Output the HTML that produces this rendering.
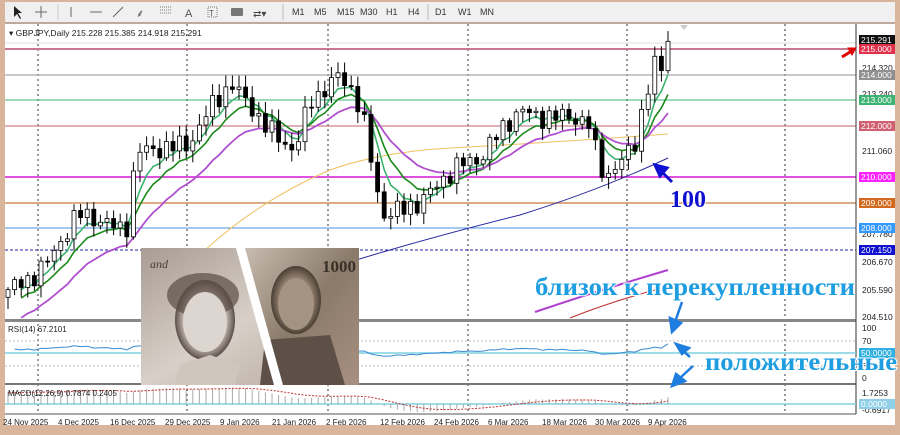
<!DOCTYPE html>
<html><head><meta charset="utf-8">
<style>
html,body{margin:0;padding:0;background:#d9b59b;}
body{width:900px;height:435px;overflow:hidden;position:relative;font-family:"Liberation Sans",sans-serif;}
svg{position:absolute;left:0;top:0;}
</style></head>
<body>
<svg id="s" width="900" height="435" xmlns="http://www.w3.org/2000/svg" font-family="Liberation Sans, sans-serif">
<defs>
<linearGradient id="gl" x1="0" y1="0" x2="1" y2="1"><stop offset="0" stop-color="#a89c94"/><stop offset="0.5" stop-color="#d8d0c8"/><stop offset="1" stop-color="#b0a49a"/></linearGradient>
<linearGradient id="gr" x1="0" y1="0" x2="1" y2="1"><stop offset="0" stop-color="#c8bcb0"/><stop offset="0.5" stop-color="#8a7a6a"/><stop offset="1" stop-color="#a89080"/></linearGradient>
<radialGradient id="face1"><stop offset="0" stop-color="#e8e2dc"/><stop offset="0.7" stop-color="#c8beb6"/><stop offset="1" stop-color="#5a4e48"/></radialGradient>
<radialGradient id="face2"><stop offset="0" stop-color="#b8a898"/><stop offset="0.7" stop-color="#8a7868"/><stop offset="1" stop-color="#4a3e34"/></radialGradient>
</defs>
<rect x="5" y="2" width="890" height="20" fill="#f0f0f0"/>
<line x1="5" y1="23" x2="895" y2="23" stroke="#a0a0a0"/>
<g font-size="9" fill="#333">
<path d="M14 6 L14 17 L17 14 L20 19 L21 18 L18 13 L22 13 Z" fill="#222"/>
<path d="M41 6v12M35 12h12" stroke="#666"/>
<line x1="58" y1="4" x2="58" y2="20" stroke="#ccc"/>
<path d="M71 7v10" stroke="#666"/>
<path d="M90 12h12" stroke="#666"/>
<path d="M113 17l10-10" stroke="#666"/>
<text x="136" y="17" font-size="11" fill="#555">⸙</text>
<path d="M160 7h12M160 10h12M160 13h12" stroke="#777" stroke-dasharray="1 1"/>
<text x="185" y="17" font-size="11" fill="#555">A</text>
<rect x="208" y="7" width="9" height="10" fill="none" stroke="#777" stroke-dasharray="1 1"/><text x="209" y="16" font-size="8" fill="#555">T</text>
<rect x="231" y="8" width="12" height="8" fill="#777" rx="1"/>
<text x="253" y="17" font-size="10" fill="#444">⇄▾</text>
<line x1="283" y1="4" x2="283" y2="20" stroke="#bbb"/>
<text x="292" y="15">M1</text><text x="314" y="15">M5</text><text x="337" y="15">M15</text><text x="360" y="15">M30</text><text x="386" y="15">H1</text><text x="408" y="15">H4</text>
<line x1="428" y1="4" x2="428" y2="20" stroke="#bbb"/>
<text x="435" y="15">D1</text><text x="458" y="15">W1</text><text x="480" y="15">MN</text>
</g>
<rect x="5" y="24" width="890" height="401" fill="#fff"/>
<g id="grid" stroke="#333" stroke-dasharray="2 3" stroke-width="1"></g>
<line x1="5" y1="49" x2="856" y2="49" stroke="#c87890" stroke-width="2"/>
<line x1="5" y1="75" x2="856" y2="75" stroke="#a8a8a8" stroke-width="1.2"/>
<line x1="5" y1="100" x2="856" y2="100" stroke="#3cb371"/>
<line x1="5" y1="126" x2="856" y2="126" stroke="#c06070"/>
<line x1="5" y1="177" x2="856" y2="177" stroke="#e050e0" stroke-width="2"/>
<line x1="5" y1="203" x2="856" y2="203" stroke="#d09060" stroke-width="1.5"/>
<line x1="5" y1="228" x2="856" y2="228" stroke="#4a90e0"/>
<line x1="5" y1="250" x2="856" y2="250" stroke="#2020a0" stroke-dasharray="3 2"/>
<line x1="5" y1="43" x2="856" y2="43" stroke="#ddd"/>
<text x="9" y="36" font-size="8.5" fill="#222">▾ GBPJPY,Daily  215.228 215.385 214.918 215.291</text>
<path d="M205 250 Q260 200 330 170 Q380 152 450 148 Q560 142 668 134" fill="none" stroke="#f0c060" stroke-width="1"/>
<path d="M340 265 Q420 240 520 215 Q600 190 668 158" fill="none" stroke="#2a2aa0" stroke-width="1"/>
<path d="M535 312 Q600 290 668 270" fill="none" stroke="#b040d0" stroke-width="2"/>
<path d="M570 318 Q610 302 655 290" fill="none" stroke="#c03030" stroke-width="1"/>
<g id="mas"></g>
<g id="cndl"></g>
<rect x="5" y="319" width="851" height="3" fill="#888"/>
<rect x="5" y="383" width="851" height="2" fill="#777"/>
<line x1="5" y1="414" x2="856" y2="414" stroke="#555"/>
<line x1="856" y1="24" x2="856" y2="414" stroke="#333"/>
<line x1="5" y1="341" x2="856" y2="341" stroke="#bbb" stroke-dasharray="2 2"/>
<line x1="5" y1="366" x2="856" y2="366" stroke="#bbb" stroke-dasharray="2 2"/>
<line x1="5" y1="353" x2="856" y2="353" stroke="#7fd0e0" stroke-width="1.5"/>
<path id="rsi" fill="none" stroke="#3a8ad0" stroke-width="1"/>
<text x="8" y="332" font-size="8" fill="#222">RSI(14) 67.2101</text>
<line x1="5" y1="404" x2="856" y2="404" stroke="#7fd0e0" stroke-width="1.5"/>
<g id="hist" stroke="#aaa"></g>
<path id="sig" fill="none" stroke="#c03030" stroke-dasharray="2 1.5"/>
<text x="8" y="396" font-size="8" fill="#222">MACD(12,26,9) 0.7874 0.2405</text>
<g>
<rect x="141" y="248" width="218" height="137" fill="url(#gl)"/>
<polygon points="245,248 359,248 359,385 275,385" fill="url(#gr)"/>
<ellipse cx="205" cy="320" rx="30" ry="40" fill="url(#face1)"/>
<ellipse cx="203" cy="295" rx="36" ry="22" fill="#5a4c44" opacity="0.7"/>
<ellipse cx="205" cy="322" rx="22" ry="30" fill="#ddd6d0"/>
<polygon points="175,385 235,385 240,365 210,355 180,365" fill="#cfc6be"/>
<ellipse cx="296" cy="300" rx="25" ry="34" fill="url(#face2)"/>
<ellipse cx="296" cy="304" rx="18" ry="26" fill="#a49282"/>
<polygon points="265,340 330,335 345,385 260,385" fill="#5e5046"/>
<text x="150" y="268" font-size="12" fill="#4a3e38" font-family="Liberation Serif, serif" font-style="italic">and</text>
<text x="322" y="272" font-size="17" fill="#3a3028" font-family="Liberation Serif, serif" font-weight="bold">1000</text>
<polygon points="236,248 245,248 283,385 274,385" fill="#fff"/>
</g>
<g font-size="8.5" fill="#222">
<text x="862" y="42">215.480</text>
<text x="862" y="71">214.320</text>
<text x="862" y="97">213.240</text>
<text x="862" y="154">211.060</text>
<text x="862" y="206">208.900</text>
<text x="862" y="237">207.780</text>
<text x="862" y="265">206.670</text>
<text x="862" y="293">205.590</text>
<text x="862" y="320">204.510</text>
<text x="862" y="331">100</text>
<text x="862" y="344">70</text>
<text x="862" y="369">30</text>
<text x="862" y="381">0</text>
<text x="862" y="396">1.7253</text>
<text x="862" y="413">-0.6917</text>
</g>
<g font-size="8.5" fill="#fff">
<rect x="859" y="35" width="36" height="10" fill="#111"/><text x="861" y="43">215.291</text>
<rect x="859" y="44" width="36" height="10" fill="#e0304a"/><text x="861" y="52">215.000</text>
<rect x="859" y="70" width="36" height="10" fill="#909090"/><text x="861" y="78">214.000</text>
<rect x="859" y="95" width="36" height="10" fill="#3cb371"/><text x="861" y="103">213.000</text>
<rect x="859" y="121" width="36" height="10" fill="#d06070"/><text x="861" y="129">212.000</text>
<rect x="859" y="172" width="36" height="10" fill="#ff20ff"/><text x="861" y="180">210.000</text>
<rect x="859" y="198" width="36" height="10" fill="#d2691e"/><text x="861" y="206">209.000</text>
<rect x="859" y="223" width="36" height="10" fill="#3399ff"/><text x="861" y="231">208.000</text>
<rect x="859" y="245" width="36" height="10" fill="#1010d0"/><text x="861" y="253">207.150</text>
<rect x="859" y="348" width="36" height="10" fill="#30b0e0"/><text x="861" y="356">50.0000</text>
<rect x="859" y="399" width="36" height="10" fill="#8fd0e8"/><text x="861" y="407">0.0000</text>
</g>
<g font-size="8" fill="#222">
<text x="3" y="425">24 Nov 2025</text><text x="58" y="425">4 Dec 2025</text><text x="110" y="425">16 Dec 2025</text><text x="165" y="425">29 Dec 2025</text><text x="220" y="425">9 Jan 2026</text><text x="272" y="425">21 Jan 2026</text><text x="326" y="425">2 Feb 2026</text><text x="380" y="425">12 Feb 2026</text><text x="434" y="425">24 Feb 2026</text><text x="488" y="425">6 Mar 2026</text><text x="542" y="425">18 Mar 2026</text><text x="595" y="425">30 Mar 2026</text><text x="648" y="425">9 Apr 2026</text>
</g>
<rect x="0" y="427" width="900" height="8" fill="#d9b59b"/>
<g font-family="Liberation Serif, serif" font-weight="bold" stroke="#fff" stroke-width="2" paint-order="stroke">
<text x="670" y="207" font-size="24" fill="#1010d0">100</text>
<text x="535" y="295" font-size="25" fill="#1e9ee0" textLength="320" lengthAdjust="spacingAndGlyphs">близок к перекупленности</text>
<text x="705" y="370" font-size="25" fill="#1e9ee0" textLength="192" lengthAdjust="spacingAndGlyphs">положительные</text>
</g>
<g stroke="#1e7ee0" stroke-width="2.5" fill="#1e7ee0">
<line x1="682" y1="302" x2="675" y2="322"/><polygon points="670,318 672,332 681,323"/>
<line x1="690" y1="357" x2="682" y2="350"/><polygon points="676,344 689,348 682,354"/>
<line x1="693" y1="366" x2="680" y2="378"/><polygon points="672,386 676,374 685,381"/>
</g>
<g stroke="#1010d0" stroke-width="3" fill="#1010d0">
<line x1="672" y1="182" x2="662" y2="172"/><polygon points="655,165 667,168 660,176"/>
</g>
<g fill="#e00000" stroke="#e00000">
<line x1="842" y1="57" x2="850" y2="52" stroke-width="3"/><polygon points="856,48 848,48 852,55"/>
</g>
<polygon points="680,25 688,25 684,30" fill="#ccc"/>
</svg>
<script>
(function(){
var NS="http://www.w3.org/2000/svg";
function el(p,t,a){var e=document.createElementNS(NS,t);for(var k in a)e.setAttribute(k,a[k]);p.appendChild(e);return e;}
var g=document.getElementById('grid');
[38,187,328,468,627,785].forEach(function(x){el(g,'line',{x1:x,y1:24,x2:x,y2:414});});
var anc=[[8,205.6],[30,206],[50,206.8],[78,208.6],[100,208.3],[125,207.9],[131,208.6],[135,211],[160,211.1],[190,211.3],[200,212],[215,213],[232,213.6],[250,212.8],[265,212],[280,211.5],[295,211],[310,213],[322,213.3],[340,214],[352,213.4],[362,212.5],[372,210.5],[382,208.5],[400,208.7],[420,209],[440,209.8],[460,210.5],[480,210.7],[500,211.8],[520,212.6],[545,212.3],[570,212.4],[590,212],[597,210.8],[606,210],[620,210.5],[635,211.4],[645,213],[655,214.4],[662,214.2],[668,215.3]];
function interp(x){for(var i=0;i<anc.length-1;i++){if(x<=anc[i+1][0]){var a=anc[i],b=anc[i+1];return a[1]+(b[1]-a[1])*(x-a[0])/(b[0]-a[0]);}}return anc[anc.length-1][1];}
function Y(p){return 49+(215-p)*25.6;}
var N=101,xs=[],cl=[];
for(var i=0;i<N;i++){var x=8+6.6*i;xs.push(x);var n=(i==N-1)?0:Math.sin(i*2.7)*0.3+Math.sin(i*1.3)*0.15;cl.push(interp(x)+n);}
var cg=document.getElementById('cndl');
for(var i=0;i<N;i++){var o=i?cl[i-1]:cl[0]-0.3,c=cl[i];var hi=Math.max(o,c)+0.1+Math.abs(Math.sin(i*3.1))*0.35,lo=Math.min(o,c)-0.1-Math.abs(Math.cos(i*1.9))*0.35;
var x=xs[i];el(cg,'line',{x1:x,y1:Y(hi),x2:x,y2:Y(lo),stroke:'#000'});
var t=Y(Math.max(o,c)),h=Math.max(1,Y(Math.min(o,c))-t);
el(cg,'rect',{x:x-2,y:t,width:4,height:h,fill:c>=o?'#fff':'#000',stroke:'#000','stroke-width':0.8});}
function ema(arr,p,seed){var k=2/(p+1),r=[],v=(seed===undefined?arr[0]:seed);for(var i=0;i<arr.length;i++){v=arr[i]*k+v*(1-k);r.push(v);}return r;}
var mg=document.getElementById('mas');
[[5,'#3cb371',1.6,205.2],[9,'#1a8a1a',1.6,204.8],[18,'#b050d0',1.8,204.0]].forEach(function(m){var e=ema(cl,m[0],m[3]),d='';for(var i=2;i<N;i++)d+=(i==2?'M':'L')+xs[i].toFixed(1)+' '+Y(e[i]).toFixed(1);el(mg,'path',{d:d,fill:'none',stroke:m[1],'stroke-width':m[2]});});
var d='',ag=0.2,al=0.15;for(var i=1;i<N;i++){var ch=cl[i]-cl[i-1];ag=(ag*13+Math.max(ch,0))/14;al=(al*13+Math.max(-ch,0))/14;var r=100-100/(1+ag/(al||1e-6));r=52+(r-50)*0.45;if(i==N-1)r=67;var y=378-r*0.51;d+=(i==1?'M':'L')+xs[i].toFixed(1)+' '+y.toFixed(1);}
document.getElementById('rsi').setAttribute('d',d);
var e12=ema(cl,12,cl[0]-1.2),e26=ema(cl,26,cl[0]-2.4),m=[];for(var i=0;i<N;i++)m.push(e12[i]-e26[i]);var sg=ema(m,9,1.1),hg=document.getElementById('hist'),sd='';
function C(v){return Math.max(387,Math.min(413,404-v*10));}
for(var i=0;i<N;i++){el(hg,'line',{x1:xs[i],y1:404,x2:xs[i],y2:C(m[i])});sd+=(i?'L':'M')+xs[i].toFixed(1)+' '+C(sg[i]).toFixed(1);}
document.getElementById('sig').setAttribute('d',sd);
})();
</script>
</body></html>
